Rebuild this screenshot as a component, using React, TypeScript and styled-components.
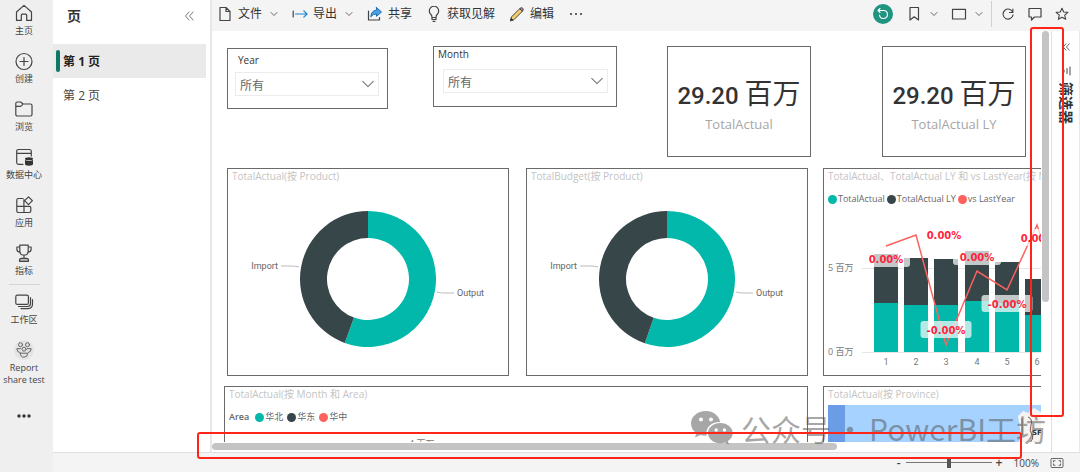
import React, { useState } from 'react';
import styled, { createGlobalStyle, css } from 'styled-components';

const TEAL = '#01b8aa';
const SLATE = '#374649';
const CORAL = '#fd625e';

const GlobalStyle = createGlobalStyle`
  *, *::before, *::after { box-sizing: border-box; }
  body {
    margin: 0;
    background: #ffffff;
    color: #333333;
    font-family: "Open Sans", "Noto Sans CJK SC", sans-serif;
    font-size: 12px;
  }
  button {
    border: 0;
    padding: 0;
    background: none;
    color: inherit;
    font: inherit;
    cursor: pointer;
  }
  svg { display: block; flex: none; }
`;

const Shell = styled.div`
  position: relative;
  display: flex;
  height: 100vh;
  overflow: hidden;
`;

/* ---------- navigation rail ---------- */

const Rail = styled.nav`
  display: flex;
  flex: none;
  flex-direction: column;
  align-items: center;
  width: 53px;
  padding: 3px 5px 0 0;
  background: #efefef;
`;

const RailGroup = styled.div<{ $gap: number }>`
  display: flex;
  flex-direction: column;
  align-items: center;
  gap: ${(p) => p.$gap}px;
`;

const RailLink = styled.a`
  display: flex;
  flex-direction: column;
  align-items: center;
  gap: 2px;
  width: 48px;
  color: #444444;
  font-size: 9px;
  line-height: 12px;
  text-align: center;
  text-decoration: none;
`;

const RailDivider = styled.hr`
  width: 31px;
  height: 1px;
  margin: 7px 0;
  border: 0;
  background: #d4d4d4;
`;

const MoreButton = styled.button`
  margin-top: 20px;
`;

/* ---------- page list ---------- */

const Body = styled.div`
  display: flex;
  flex: 1;
  flex-direction: column;
  min-width: 0;
`;

const Columns = styled.div`
  display: flex;
  flex: 1;
  min-height: 0;
`;

const PagePane = styled.aside`
  flex: none;
  width: 159px;
  border-right: 2px solid #e8e8e8;
  background: #ffffff;
`;

const PaneHeader = styled.header`
  display: flex;
  align-items: center;
  justify-content: space-between;
  height: 32px;
  margin-bottom: 12px;
  padding: 0 16px 0 14px;
`;

const PaneTitle = styled.h2`
  margin: 0;
  font-size: 14px;
  font-weight: 700;
  line-height: 20px;
`;

const PageTab = styled.button<{ $active?: boolean }>`
  display: flex;
  align-items: center;
  gap: 3px;
  width: 153px;
  height: 34px;
  padding-left: 3px;
  color: ${(p) => (p.$active ? '#222222' : '#444444')};
  background: ${(p) => (p.$active ? '#eaeaea' : 'transparent')};
  font-size: 12px;
  font-weight: ${(p) => (p.$active ? 700 : 400)};

  &::before {
    content: '';
    width: 4px;
    height: 22px;
    border-radius: 2px;
    background: ${(p) => (p.$active ? '#117865' : 'transparent')};
  }
`;

/* ---------- toolbar ---------- */

const Main = styled.main`
  display: flex;
  flex: 1;
  flex-direction: column;
  min-width: 0;
`;

const Toolbar = styled.div`
  display: flex;
  flex: none;
  align-items: center;
  justify-content: space-between;
  height: 31px;
  padding: 0 10px 3px 5px;
  background: #f4f4f4;
`;

const ToolGroup = styled.div<{ $gap: number }>`
  display: flex;
  align-items: center;
  gap: ${(p) => p.$gap}px;
`;

const ToolButton = styled.button`
  display: flex;
  align-items: center;
  gap: 5px;
  color: #333333;
  font-size: 12px;
  line-height: 18px;
  white-space: nowrap;
`;

const ToolCaret = styled.span`
  padding-left: 3px;
`;

const ResetButton = styled.button`
  display: grid;
  place-items: center;
  width: 20px;
  height: 20px;
  border-radius: 50%;
  background: #1f9480;
`;

const ToolDivider = styled.span`
  width: 1px;
  height: 26px;
  background: #d0d0d0;
`;

/* ---------- report area ---------- */

const Workbench = styled.div`
  display: flex;
  flex: 1;
  min-height: 0;
`;

const CanvasColumn = styled.div`
  display: flex;
  flex: 1;
  flex-direction: column;
  min-width: 0;
`;

const Viewport = styled.div`
  flex: 1;
  min-height: 0;
  overflow: hidden;
`;

const Sheet = styled.div`
  width: 1100px;
  padding: 15px 0 0 12px;
`;

const SheetRow = styled.div<{ $top?: number; $indent?: number }>`
  display: flex;
  align-items: flex-start;
  margin-top: ${(p) => p.$top ?? 0}px;
  padding-left: ${(p) => p.$indent ?? 0}px;
`;

const Panel = styled.section<{ $width: number; $height: number; $before?: number; $drop?: number }>`
  flex: none;
  width: ${(p) => p.$width}px;
  height: ${(p) => p.$height}px;
  margin: ${(p) => p.$drop ?? 0}px 0 0 ${(p) => p.$before ?? 0}px;
  overflow: hidden;
  border: 1px solid #6a6a6a;
  background: #ffffff;
`;

const PanelTitle = styled.h3`
  margin: 0;
  padding-left: 4px;
  color: #c4c4c4;
  font-size: 10px;
  font-weight: 400;
  line-height: 14px;
  white-space: nowrap;
`;

const SlicerBody = styled.div<{ $top: number; $gap: number; $left: number }>`
  display: flex;
  flex-direction: column;
  gap: ${(p) => p.$gap}px;
  padding: ${(p) => p.$top}px 8px 0 ${(p) => p.$left}px;
`;

const SlicerLabel = styled.label<{ $indent: number }>`
  margin-left: ${(p) => p.$indent}px;
  font-size: 10px;
  line-height: 12px;
`;

const SelectFrame = styled.div`
  display: grid;
  align-items: center;

  > * { grid-area: 1 / 1; }
  > svg { justify-self: end; margin-right: 4px; pointer-events: none; }
`;

const Select = styled.select`
  width: 100%;
  height: 24px;
  padding: 2px 4px 0;
  border: 1px solid #ececec;
  border-radius: 0;
  appearance: none;
  background: #ffffff;
  color: #666666;
  font: inherit;
  font-size: 12px;
`;

const CardBody = styled.div`
  display: flex;
  flex-direction: column;
  align-items: center;
  padding-top: 30px;
`;

const CardValue = styled.div`
  color: #333333;
  font-family: Roboto, "Noto Sans CJK SC", sans-serif;
  font-size: 24px;
  font-weight: 500;
  line-height: 36px;
  white-space: nowrap;
`;

const CardUnit = styled.span`
  font-size: 28px;
  font-weight: 400;
`;

const CardLabel = styled.div`
  color: #a6a6a6;
  font-size: 13px;
  line-height: 20px;
`;

const Legend = styled.div<{ $gap: number }>`
  display: flex;
  align-items: center;
  gap: ${(p) => p.$gap}px;
  height: 12px;
  margin-top: 10px;
  padding-left: 4px;
  color: #666666;
  font-size: 9px;
  line-height: 12px;
  white-space: nowrap;
`;

const LegendItem = styled.span<{ $color: string }>`
  display: flex;
  align-items: center;
  gap: 1px;

  &::before {
    content: '';
    width: 9px;
    height: 9px;
    border-radius: 50%;
    background: ${(p) => p.$color};
  }
`;

const LegendName = styled.strong`
  margin-right: 2px;
  font-weight: 600;
`;

const ClippedAxis = styled.div`
  padding: 15px 0 0 184px;
  color: #777777;
  font-size: 9px;
  line-height: 12px;
`;

const MapWrap = styled.div`
  padding: 4px 0 0 4px;
`;

const trackBase = css`
  flex: none;
  background: #ffffff;
`;

const VerticalTrack = styled.div`
  ${trackBase}
  width: 11px;
  padding-left: 1px;
  border-right: 1px solid #e0e0e0;
`;

const VerticalThumb = styled.div`
  width: 7px;
  height: calc(100% - 150px);
  border-radius: 4px;
  background: #c4c4c4;
`;

const HorizontalTrack = styled.div`
  ${trackBase}
  height: 10px;
  padding-top: 1px;
`;

const HorizontalThumb = styled.div`
  width: calc(100% - 204px);
  height: 7px;
  border-radius: 4px;
  background: #c4c4c4;
`;

const FilterPane = styled.aside`
  display: flex;
  flex: none;
  flex-direction: column;
  align-items: center;
  width: 28px;
  padding-top: 12px;
  border-right: 1px solid #e8e8e8;
`;

const FilterTitle = styled.h2`
  margin: 6px 0 0;
  color: #333333;
  font-size: 14px;
  font-weight: 700;
  line-height: 16px;
  writing-mode: vertical-rl;
  text-orientation: sideways;
`;

const FilterIcon = styled.span`
  margin-top: 15px;
`;

/* ---------- status bar ---------- */

const StatusBar = styled.footer`
  display: flex;
  flex: none;
  align-items: center;
  justify-content: flex-end;
  gap: 4px;
  height: 20px;
  padding-right: 16px;
  border-top: 1px solid #e0e0e0;
  background: #f4f4f4;
  color: #444444;
  font-size: 10px;
  line-height: 16px;
`;

const ZoomRange = styled.input`
  width: 86px;
  height: 12px;
  margin: 0;
  appearance: none;
  background: linear-gradient(#777777, #777777) center / 100% 1px no-repeat;

  &::-webkit-slider-thumb {
    width: 4px;
    height: 10px;
    appearance: none;
    background: #555555;
  }
`;

const ZoomStep = styled.button`
  width: 6px;
  font-size: 12px;
  font-weight: 600;
`;

const ZoomValue = styled.output`
  margin: 0 7px 0 8px;
`;

/* ---------- overlays ---------- */

const Watermark = styled.div`
  position: absolute;
  right: 34px;
  bottom: 24px;
  display: flex;
  align-items: center;
  gap: 8px;
  color: rgba(80, 80, 80, 0.5);
  font-family: "Noto Sans CJK SC", sans-serif;
  font-size: 30px;
  line-height: 40px;
  white-space: nowrap;
  pointer-events: none;
`;

const WatermarkText = styled.span`
  display: flex;
  gap: 4px;
`;

const Highlight = styled.div<{ $place: 'vertical' | 'horizontal' }>`
  position: absolute;
  border: 2px solid #ff2418;
  border-radius: 3px;
  pointer-events: none;
  ${(p) =>
    p.$place === 'vertical'
      ? css`top: 27px; right: 16px; bottom: 55px; width: 34px;`
      : css`left: 197px; right: 58px; bottom: 13px; height: 27px;`}
`;

/* ---------- icons ---------- */

type IconProps = { w?: number; h?: number; box?: string; stroke?: string; sw?: number; children: React.ReactNode };

const Icon = ({ w = 20, h = 20, box, stroke = '#444', sw = 1.2, children }: IconProps) => (
  <svg
    width={w}
    height={h}
    viewBox={box ?? `0 0 ${w} ${h}`}
    fill="none"
    stroke={stroke}
    strokeWidth={sw}
    strokeLinecap="round"
    strokeLinejoin="round"
    aria-hidden="true"
  >
    {children}
  </svg>
);

const HomeIcon = () => (
  <Icon>
    <path d="M2.5 9 10 2.4 17.500 9v8.400h-4.800v-5.200q0-1-1-1H8.300q-1 0-1 1v5.200H2.500z" />
  </Icon>
);
const CreateIcon = () => (
  <Icon>
    <circle cx="10" cy="10.500" r="8" />
    <path d="M10 6.500v8M6 10.500h8" />
  </Icon>
);
const BrowseIcon = () => (
  <Icon>
    <path d="M1.800 15.500v-11q0-1.500 1.500-1.500h3.500L9 5h7.500q1.500 0 1.500 1.500v9q0 1.500-1.500 1.500h-13q-1.700 0-1.700-1.500zM1.800 7.300h4.400q1.200 0 2.800-2.300" />
  </Icon>
);
const DataIcon = () => (
  <Icon>
    <path d="M9 17.300H4.500q-1.800 0-1.800-1.800V4.500q0-2 2-2h10.600q2 0 2 2V9M2.700 6.300h14.600" />
    <ellipse cx="15" cy="11.800" rx="4" ry="1.500" fill="#333" stroke="none" />
    <path d="M11 13q4 2 8 0v4q0 1.700-4 1.700t-4-1.700z" fill="#333" stroke="none" />
  </Icon>
);
const AppsIcon = () => (
  <Icon>
    <path d="M9 3.500H4.200q-1.400 0-1.400 1.400v11.200q0 1.400 1.400 1.400h11.200q1.400 0 1.400-1.400v-3.400q0-1.400-1.400-1.400H2.800M10 17.500V11" />
    <path d="M9.900 11.200V4.500M14.500 1.800l3.900 3.900-3.900 3.900-3.900-3.900z" />
  </Icon>
);
const MetricsIcon = () => (
  <Icon>
    <path d="M5.800 2.200h8.400V8q0 4.200-4.200 4.200T5.800 8zM5.800 4H2.900v2.200q0 2.600 3.200 3M14.200 4h2.900v2.200q0 2.600-3.200 3M10 12.200V15" />
    <path d="M5.500 18.300v-1q0-2 2-2h5q2 0 2 2v1z" fill="#bbb" />
  </Icon>
);
const WorkspaceIcon = () => (
  <Icon>
    <rect x="1.800" y="3.200" width="12.600" height="9.200" rx="1.500" />
    <path d="M4.500 14.500h9q3 0 3-3V5.500M7 16.600h7q4.500 0 4.500-4.500V7.500" />
  </Icon>
);
const TeamIcon = () => (
  <Icon stroke="#666" sw={1}>
    <circle cx="10" cy="10" r="10" fill="#e4e4e4" stroke="none" />
    <circle cx="6.500" cy="4.700" r="2" />
    <circle cx="13.500" cy="4.700" r="2" />
    <circle cx="10" cy="9.200" r="2" />
    <path d="M6.500 8.700H2.800q0 3.300 2.800 3.800M13.500 8.700h3.700q0 3.300-2.800 3.800M6.300 13.200h7.400q0 4-3.700 4t-3.700-4z" />
  </Icon>
);
const DotsIcon = ({ r = 1.4, spread = 5 }: { r?: number; spread?: number }) => (
  <Icon w={16} h={20} stroke="none">
    <g fill="#333">
      <circle cx={8 - spread} cy="10" r={r} />
      <circle cx="8" cy="10" r={r} />
      <circle cx={8 + spread} cy="10" r={r} />
    </g>
  </Icon>
);
const Chevron = ({ w = 8, color = '#666' }: { w?: number; color?: string }) => (
  <Icon w={w} h={w} box="0 0 8 8" stroke={color} sw={w > 8 ? 0.6 : 1}>
    <path d="M1 2.500 4 5.500 7 2.500" />
  </Icon>
);
const CollapseIcon = ({ size = 10, color = '#777' }: { size?: number; color?: string }) => (
  <Icon w={size} h={size} box="0 0 10 10" stroke={color} sw={1}>
    <path d="M5 1 1.500 5 5 9M9 1 5.500 5 9 9" />
  </Icon>
);
const FileIcon = () => (
  <Icon w={16} h={16}>
    <path d="M3 1.500h6l4 4v9H3zM9 1.500v4h4" />
  </Icon>
);
const ExportIcon = () => (
  <Icon w={16} h={16} stroke="#1a86d0">
    <path d="M3.500 8H15M11.800 4.800 15 8l-3.200 3.200" />
    <path d="M1.200 5v6" stroke="#444" />
  </Icon>
);
const ShareIcon = () => (
  <Icon w={16} h={16}>
    <path d="M1.500 5v9h11v-2.500" />
    <path d="M9.500 1.500 14.500 6l-5 4.300V8Q6 7.600 3.800 10.800 4.200 4.500 9.500 4z" fill="#4aa3e0" stroke="#1a6fb5" strokeWidth="1" />
  </Icon>
);
const BulbIcon = () => (
  <Icon w={16} h={16}>
    <path d="M6 11.500q0-2-1.300-3.200A4.700 4.700 0 1 1 11.300 8.300Q10 9.500 10 11.500zM6 13.500h4M7 15.300h2M6 11.500v2M10 11.500v2" />
  </Icon>
);
const PencilIcon = () => (
  <Icon w={16} h={16} sw={1}>
    <path d="M1.500 14.500 2.600 10.800 11 2.400 13.600 5 5.200 13.400z" fill="#f3cf6b" />
    <path d="M11 2.400q1.400-1.600 2.700-.2t-.1 2.800z" fill="#c07ac0" />
    <path d="M1.500 14.500 2.200 12.200 3.800 13.800z" fill="#333" />
  </Icon>
);
const ResetIcon = () => (
  <Icon w={14} h={14} stroke="#fff" sw={1.1}>
    <path d="M2 3.500h5.500a4 4 0 1 1-4 4.500M4 1.500l-2 2 2 2" />
  </Icon>
);
const BookmarkIcon = () => (
  <Icon w={16} h={16}>
    <path d="M4 1.500h8.500v12.500L8.200 10.800 4 14z" />
  </Icon>
);
const ViewIcon = () => (
  <Icon w={16} h={16}>
    <rect x="1.500" y="3.300" width="13" height="9.700" />
  </Icon>
);
const RefreshIcon = () => (
  <Icon w={16} h={16} sw={1.1}>
    <path d="M12.800 6.500A5 5 0 1 0 13 8.800M12.900 3v3.500H9.500" />
  </Icon>
);
const CommentIcon = () => (
  <Icon w={16} h={16}>
    <path d="M2 2.500h12v8.500H7.500L4.500 14v-3H2z" />
  </Icon>
);
const StarIcon = () => (
  <Icon w={16} h={16} sw={1.1}>
    <path d="M8 2.200 9.700 6l4.200.4-3.200 2.800 1 4.100L8 11.200l-3.700 2.100 1-4.100L2.100 6.400 6.300 6z" />
  </Icon>
);
const FitIcon = () => (
  <Icon w={14} h={12} stroke="#666" sw={1}>
    <rect x="1" y="1.500" width="12" height="9" rx="1" />
    <path d="M3.500 5V3.700H5M9 3.700h1.500V5M10.500 7v1.300H9M5 8.300H3.500V7" />
  </Icon>
);
const WechatIcon = () => (
  <svg width="42" height="34" viewBox="0 0 42 34" fill="currentColor" aria-hidden="true">
    <path
      fillRule="evenodd"
      d="M15 0C6.500 0 0 5.500 0 12.500c0 4 2.100 7.300 5.500 9.600L4 26.500l5.200-2.600q2.800.8 6.500.8C14 17 20 10.800 29.300 11 28 4.500 22 0 15 0zM10 6.500a2 2 0 1 1 0 4 2 2 0 0 1 0-4zM20 6.500a2 2 0 1 1 0 4 2 2 0 0 1 0-4z"
    />
    <path
      fillRule="evenodd"
      d="M29.300 12C22.500 12 17 16.500 17 22s5.500 10.200 12.300 10.200q2.400 0 4.600-.7l4 2.300-1-3.700C40 28.200 41.700 25.300 41.700 22c0-5.500-5.500-10-12.400-10zM25.200 17.300a1.700 1.700 0 1 1 0 3.400 1.700 1.700 0 0 1 0-3.400zM33.400 17.300a1.700 1.700 0 1 1 0 3.400 1.700 1.700 0 0 1 0-3.400z"
    />
  </svg>
);

/* ---------- visuals ---------- */

const Slicer = ({ name, top, gap, left, indent }: { name: string; top: number; gap: number; left: number; indent: number }) => (
  <SlicerBody $top={top} $gap={gap} $left={left}>
    <SlicerLabel htmlFor={name} $indent={indent}>{name}</SlicerLabel>
    <SelectFrame>
      <Select id={name} defaultValue="all">
        <option value="all">所有</option>
      </Select>
      <Chevron w={14} color="#777" />
    </SelectFrame>
  </SlicerBody>
);

const Card = ({ label }: { label: string }) => (
  <CardBody>
    <CardValue>29.20 <CardUnit>百万</CardUnit></CardValue>
    <CardLabel>{label}</CardLabel>
  </CardBody>
);

const Donut = ({ angle }: { angle: number }) => {
  const cx = 140;
  const cy = 96;
  const at = (r: number, deg: number) => {
    const a = (deg * Math.PI) / 180;
    return `${cx + r * Math.sin(a)} ${cy - r * Math.cos(a)}`;
  };
  const ring = (from: number, to: number) => {
    const large = to - from > 180 ? 1 : 0;
    return `M${at(68, from)}A68 68 0 ${large} 1 ${at(68, to)}L${at(41, to)}A41 41 0 ${large} 0 ${at(41, from)}z`;
  };
  return (
    <svg width="280" height="191" viewBox="0 0 280 191" fontFamily="Roboto, sans-serif" fontSize="9" fill="#666">
      <path d={ring(0, angle)} fill={TEAL} />
      <path d={ring(angle, 360)} fill={SLATE} />
      <path d="M53 83h10q5 0 8 1M209 109q3 1 8 1h9" fill="none" stroke="#bbb" />
      <text x="50" y="86" textAnchor="end">Import</text>
      <text x="229" y="113">Output</text>
    </svg>
  );
};

const bars = [
  { x: 50, top: 49, mid: 98 },
  { x: 80, top: 53, mid: 100 },
  { x: 110, top: 54, mid: 100 },
  { x: 141, top: 46, mid: 96 },
  { x: 171, top: 57, mid: 98 },
  { x: 201, top: 74, mid: 110 },
  { x: 231, top: 60, mid: 102 },
];

const marks = [
  { x: 62, y: 54, text: '0.00%', boxed: true },
  { x: 120, y: 30, text: '0.00%', boxed: false },
  { x: 122, y: 125, text: '-0.00%', boxed: true },
  { x: 153, y: 52, text: '0.00%', boxed: true },
  { x: 183, y: 99, text: '-0.00%', boxed: true },
  { x: 214, y: 33, text: '0.00%', boxed: true },
];

const ComboChart = () => (
  <svg width="270" height="170" viewBox="0 0 270 170" fontFamily='"Open Sans", "Noto Sans CJK SC", sans-serif' fontSize="9" fill="#777">
    <path d="M38 63.500h232M38 147.500h232" stroke="#e6e6e6" />
    <text x="4" y="66">5 百万</text>
    <text x="4" y="150">0 百万</text>
    {bars.map((b, i) => (
      <g key={b.x}>
        <rect x={b.x} y={b.top} width="24" height={b.mid - b.top} fill={SLATE} />
        <rect x={b.x} y={b.mid} width="24" height={147 - b.mid} fill={TEAL} />
        <text x={b.x + 12} y="160" textAnchor="middle" fontFamily="Roboto, sans-serif">{i + 1}</text>
      </g>
    ))}
    <path d="M62 41 92 30 122 140 153 66 183 85 213 20 243 110" fill="none" stroke={CORAL} strokeWidth="1.500" />
    {marks.map((m) => {
      const w = m.text.length > 5 ? 51 : 48;
      return (
        <g key={m.x}>
          {m.boxed && <rect x={m.x - w / 2} y={m.y - 9} width={w} height="17" rx="3" fill="#fff" fillOpacity="0.7" />}
          <text
            x={m.x}
            y={m.y + 4}
            textAnchor="middle"
            fontFamily='"DejaVu Sans", sans-serif'
            fontSize="10"
            fontWeight="700"
            fill="#ff1f3d"
          >
            {m.text}
          </text>
        </g>
      );
    })}
  </svg>
);

const ProvinceMap = () => (
  <svg width="270" height="60" viewBox="0 0 270 60" role="img" aria-label="Province">
    <rect width="270" height="60" fill="#a5d2ff" />
    <rect width="17" height="60" fill="#6a9de6" />
    <path d="M190 11 195 6 200 8 206 3 213 7 220 5V60H193L190 42 193 30z" fill="#f6f3f1" />
    <path d="M194 13v17M200 12q5 2 3 8t1 10-5 10" fill="none" stroke="#7d5a5a" />
    <text x="204" y="30" fontFamily='"DejaVu Sans", sans-serif' fontSize="7" fontWeight="700" fill="#333">SF</text>
  </svg>
);

const railItems = [
  { label: '主页', icon: <HomeIcon /> },
  { label: '创建', icon: <CreateIcon /> },
  { label: '浏览', icon: <BrowseIcon /> },
  { label: '数据中心', icon: <DataIcon /> },
  { label: '应用', icon: <AppsIcon /> },
  { label: '指标', icon: <MetricsIcon /> },
];

const tools = [
  { label: '文件', icon: <FileIcon />, menu: true },
  { label: '导出', icon: <ExportIcon />, menu: true },
  { label: '共享', icon: <ShareIcon /> },
  { label: '获取见解', icon: <BulbIcon /> },
  { label: '编辑', icon: <PencilIcon /> },
];

export default function App() {
  const [page, setPage] = useState(1);
  const [zoom, setZoom] = useState(100);

  return (
    <Shell>
      <GlobalStyle />
      <Rail>
        <RailGroup $gap={14}>
          {railItems.map((item) => (
            <RailLink key={item.label} href="#">
              {item.icon}
              {item.label}
            </RailLink>
          ))}
        </RailGroup>
        <RailDivider />
        <RailGroup $gap={14}>
          <RailLink href="#"><WorkspaceIcon />工作区</RailLink>
          <RailLink href="#"><TeamIcon />Report<br />share test</RailLink>
        </RailGroup>
        <MoreButton aria-label="更多"><DotsIcon r={1.7} /></MoreButton>
      </Rail>

      <Body>
        <Columns>
          <PagePane>
            <PaneHeader>
              <PaneTitle>页</PaneTitle>
              <button aria-label="折叠"><CollapseIcon /></button>
            </PaneHeader>
            {[1, 2].map((n) => (
              <PageTab key={n} $active={page === n} onClick={() => setPage(n)}>第 {n} 页</PageTab>
            ))}
          </PagePane>

          <Main>
            <Toolbar>
              <ToolGroup $gap={14}>
                {tools.map((t) => (
                  <ToolButton key={t.label}>
                    {t.icon}
                    {t.label}
                    {t.menu && <ToolCaret><Chevron /></ToolCaret>}
                  </ToolButton>
                ))}
                <ToolButton aria-label="更多选项"><DotsIcon r={1} /></ToolButton>
              </ToolGroup>
              <ToolGroup $gap={8}>
                <ToolGroup $gap={13}>
                  <ResetButton aria-label="重置"><ResetIcon /></ResetButton>
                  <ToolButton aria-label="书签"><BookmarkIcon /><ToolCaret><Chevron /></ToolCaret></ToolButton>
                  <ToolButton aria-label="视图"><ViewIcon /><ToolCaret><Chevron /></ToolCaret></ToolButton>
                </ToolGroup>
                <ToolDivider />
                <ToolGroup $gap={11}>
                  <ToolButton aria-label="刷新"><RefreshIcon /></ToolButton>
                  <ToolButton aria-label="注释"><CommentIcon /></ToolButton>
                  <ToolButton aria-label="收藏"><StarIcon /></ToolButton>
                </ToolGroup>
              </ToolGroup>
            </Toolbar>

            <Workbench>
              <CanvasColumn>
                <Viewport>
                  <Sheet>
                    <SheetRow $indent={3}>
                      <Panel $width={161} $height={61} $drop={2}>
                        <Slicer name="Year" top={5} gap={6} left={7} indent={3} />
                      </Panel>
                      <Panel $width={184} $height={61} $before={45}>
                        <Slicer name="Month" top={1} gap={9} left={9} indent={-5} />
                      </Panel>
                      <Panel $width={144} $height={111} $before={50}>
                        <Card label="TotalActual" />
                      </Panel>
                      <Panel $width={144} $height={111} $before={71}>
                        <Card label="TotalActual LY" />
                      </Panel>
                    </SheetRow>

                    <SheetRow $top={11} $indent={3}>
                      <Panel $width={282} $height={208}>
                        <PanelTitle>TotalActual(按 Product)</PanelTitle>
                        <Donut angle={200} />
                      </Panel>
                      <Panel $width={282} $height={208} $before={17}>
                        <PanelTitle>TotalBudget(按 Product)</PanelTitle>
                        <Donut angle={199} />
                      </Panel>
                      <Panel $width={272} $height={208} $before={15}>
                        <PanelTitle>TotalActual、TotalActual LY 和 vs LastYear(按 Month)</PanelTitle>
                        <Legend $gap={2}>
                          <LegendItem $color={TEAL}>TotalActual</LegendItem>
                          <LegendItem $color={SLATE}>TotalActual LY</LegendItem>
                          <LegendItem $color={CORAL}>vs LastYear</LegendItem>
                        </Legend>
                        <ComboChart />
                      </Panel>
                    </SheetRow>

                    <SheetRow $top={10}>
                      <Panel $width={584} $height={208}>
                        <PanelTitle>TotalActual(按 Month 和 Area)</PanelTitle>
                        <Legend $gap={4}>
                          <LegendName>Area</LegendName>
                          <LegendItem $color={TEAL}>华北</LegendItem>
                          <LegendItem $color={SLATE}>华东</LegendItem>
                          <LegendItem $color={CORAL}>华中</LegendItem>
                        </Legend>
                        <ClippedAxis>4 百万</ClippedAxis>
                      </Panel>
                      <Panel $width={272} $height={208} $before={15}>
                        <PanelTitle>TotalActual(按 Province)</PanelTitle>
                        <MapWrap><ProvinceMap /></MapWrap>
                      </Panel>
                    </SheetRow>
                  </Sheet>
                </Viewport>
                <HorizontalTrack><HorizontalThumb /></HorizontalTrack>
              </CanvasColumn>
              <VerticalTrack><VerticalThumb /></VerticalTrack>
              <FilterPane>
                <button aria-label="展开筛选器"><CollapseIcon size={8} color="#444" /></button>
                <FilterIcon>
                  <Icon w={10} h={10} stroke="#444" sw={1}>
                    <path d="M9 1v8M6 2.500v5M3 4v2" />
                  </Icon>
                </FilterIcon>
                <FilterTitle>筛选器</FilterTitle>
              </FilterPane>
            </Workbench>
          </Main>
        </Columns>

        <StatusBar>
          <ZoomStep aria-label="缩小" onClick={() => setZoom(zoom - 10)}>-</ZoomStep>
          <ZoomRange
            type="range"
            aria-label="缩放"
            min={0}
            max={200}
            value={zoom}
            onChange={(e) => setZoom(Number(e.target.value))}
          />
          <ZoomStep aria-label="放大" onClick={() => setZoom(zoom + 10)}>+</ZoomStep>
          <ZoomValue>{zoom}%</ZoomValue>
          <button aria-label="适应页面"><FitIcon /></button>
        </StatusBar>
      </Body>

      <Watermark>
        <WechatIcon />
        <WatermarkText>
          <span>公众号</span>
          <span>·</span>
          <span>PowerBI工坊</span>
        </WatermarkText>
      </Watermark>
      <Highlight $place="vertical" />
      <Highlight $place="horizontal" />
    </Shell>
  );
}
